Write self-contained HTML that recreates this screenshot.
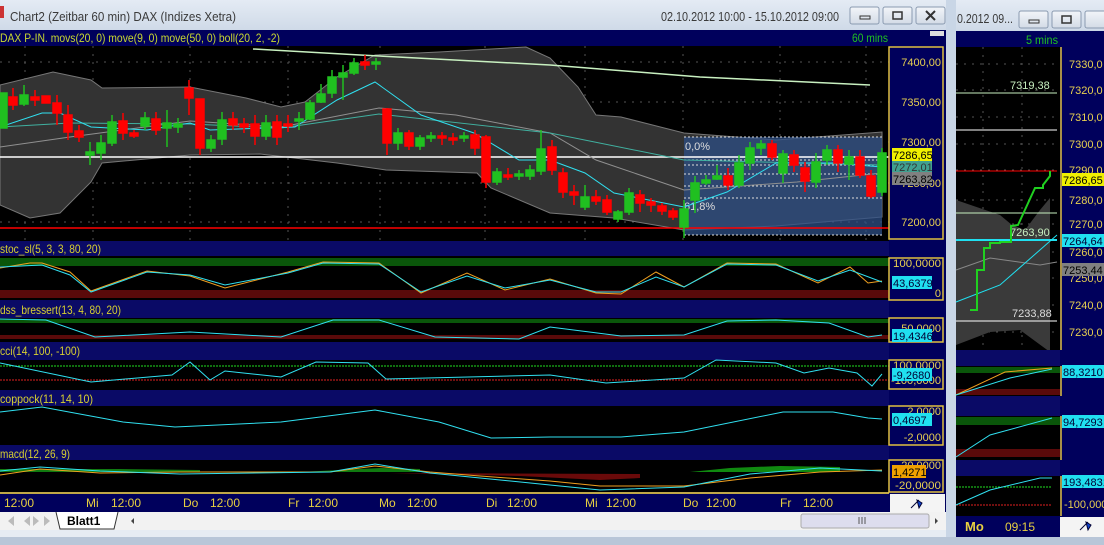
<!DOCTYPE html>
<html><head><meta charset="utf-8"><style>
html,body{margin:0;padding:0;background:#c8d4e4;overflow:hidden}
svg{display:block}
text{font-family:"Liberation Sans",sans-serif}
</style></head><body>
<svg width="1104" height="545" viewBox="0 0 1104 545" xmlns="http://www.w3.org/2000/svg">
<defs>
<linearGradient id="tb" x1="0" y1="0" x2="0" y2="1"><stop offset="0" stop-color="#e4ebf4"/><stop offset="1" stop-color="#cfdae8"/></linearGradient>
<linearGradient id="btn" x1="0" y1="0" x2="0" y2="1"><stop offset="0" stop-color="#f2f5f9"/><stop offset="1" stop-color="#d3dbe6"/></linearGradient>
</defs>
<rect x="0" y="0" width="1104" height="545" fill="#c9d6e6"/>
<rect x="0" y="0" width="946" height="30" fill="url(#tb)"/>
<rect x="0" y="6" width="4" height="12" fill="#c33"/>
<text x="10" y="21" font-size="13" fill="#3a3a3a" textLength="226" lengthAdjust="spacingAndGlyphs">Chart2 (Zeitbar 60 min)  DAX (Indizes Xetra)</text>
<text x="661" y="21" font-size="12.5" fill="#3a3a3a" textLength="178" lengthAdjust="spacingAndGlyphs">02.10.2012 10:00 - 15.10.2012 09:00</text>
<g stroke="#8a9ab0" fill="url(#btn)"><rect x="850" y="7" width="29" height="17" rx="2"/><rect x="883" y="7" width="29" height="17" rx="2"/><rect x="916" y="7" width="29" height="17" rx="2"/></g>
<rect x="860" y="16" width="10" height="3" fill="none" stroke="#333"/>
<rect x="893" y="12" width="9" height="7" fill="none" stroke="#333" stroke-width="1.5"/>
<path d="M926 11l9 9M935 11l-9 9" stroke="#333" stroke-width="2"/>
<rect x="0" y="30" width="946" height="16" fill="#00005c"/>
<text x="0" y="42" font-size="12" fill="#c8d830" textLength="280" lengthAdjust="spacingAndGlyphs">DAX P-IN. movs(20, 0) move(9, 0) move(50, 0) boll(20, 2, -2)</text>
<text x="852" y="42" font-size="12" fill="#20c020" textLength="36" lengthAdjust="spacingAndGlyphs">60 mins</text>
<rect x="930" y="31" width="14" height="5" fill="#ddd"/>
<rect x="0" y="46" width="889" height="195" fill="#000"/>
<g stroke="#555" stroke-dasharray="2,6" stroke-width="1">
<path d="M0 62H889M0 102H889M0 142H889M0 183H889M0 222H889"/>
<path d="M25 46V493M93 46V493M190 46V493M288 46V493M380 46V493M485 46V493M585 46V493M683 46V493M780 46V493M866 46V493"/>
</g>
<path d="M0 85L53 72L91 80L102 88L190 87L246 98L281 107L305 102L337 77L375 55L439 52L526 47L550 58L578 87L596 115L621 117L684 133L776 140L882 132L882 217L776 226L684 230L614 218L550 213L491 188L477 173L386 170L337 163L260 154L190 155L102 163L91 182L60 213L30 218L0 205Z" fill="#333" stroke="#777"/>
<rect x="684" y="137" width="198" height="98" fill="#2e4f86" opacity="0.75"/>
<g stroke="#ddd" stroke-dasharray="2,2"><path d="M684 137H882M684 160H882M684 165H882M684 174H882M684 186H882M684 198H882M684 235H882"/></g>
<text x="685" y="150" font-size="11" fill="#ddd">0,0%</text>
<text x="684" y="210" font-size="11" fill="#ddd">61,8%</text>
<path d="M0 157H889" stroke="#fff" stroke-width="1.5"/>
<path d="M0 228H889" stroke="#f00" stroke-width="1.5"/>
<path d="M253 49L360 55L550 65L700 77L870 85" stroke="#c8f0c0" fill="none" stroke-width="1.5"/>
<polyline points="0,147 70,137 190,121 281,127 379,108 456,115 550,133 596,160 684,190 797,182 882,173" stroke="#909090" fill="none"/>
<polyline points="0,127 70,123 190,124 281,128 379,114 550,133 684,160 882,165" stroke="#40b0a0" fill="none"/>
<polyline points="0,127 42,113 60,113 91,127 147,130 190,123 210,130 295,127 337,100 375,82 421,115 474,133 519,160 550,160 585,173 614,193 684,207 727,192 776,163 833,163 882,167" stroke="#30e0f0" fill="none"/>
<g stroke-width="1.5">
<g fill="#20c020" stroke="#20c020">
<rect x="-1" y="93" width="8" height="35"/><rect x="20" y="95" width="8" height="9"/><path d="M24 85V106M90 142V165M101 135V160M112 115V146M145 112V130M167 110V147M178 118V133M211 135V152M222 112V145M266 115V140M299 112V130M310 100V120M321 84V103M332 70V98M343 65V100M354 58V75M376 58V70M398 128V150M420 135V150M431 132V142M464 132V142M497 168V185M519 170V180M530 165V180M541 130V175M585 185V210M618 210V222M629 188V215M684 200V238M695 176V213M706 175V185M717 165V180M739 155V188M750 142V170M761 140V155M783 150V183M816 153V188M827 145V165M849 150V180M882 148V196"/>
<rect x="86" y="152" width="8" height="3"/><rect x="97" y="143" width="8" height="10"/><rect x="108" y="122" width="8" height="21"/><rect x="141" y="118" width="8" height="8"/><rect x="163" y="123" width="8" height="5"/><rect x="174" y="124" width="8" height="3"/><rect x="207" y="140" width="8" height="8"/><rect x="218" y="120" width="8" height="19"/><rect x="262" y="123" width="8" height="13"/><rect x="295" y="119" width="8" height="2"/><rect x="306" y="103" width="8" height="16"/><rect x="317" y="94" width="8" height="8"/><rect x="328" y="77" width="8" height="16"/><rect x="339" y="73" width="8" height="4"/><rect x="350" y="63" width="8" height="10"/><rect x="372" y="62" width="8" height="2"/><rect x="394" y="133" width="8" height="10"/><rect x="416" y="138" width="8" height="8"/><rect x="427" y="136" width="8" height="2"/><rect x="460" y="136" width="8" height="2"/><rect x="493" y="172" width="8" height="10"/><rect x="515" y="174" width="8" height="2"/><rect x="526" y="170" width="8" height="6"/><rect x="537" y="149" width="8" height="22"/><rect x="581" y="197" width="8" height="10"/><rect x="614" y="212" width="8" height="7"/><rect x="625" y="193" width="8" height="19"/><rect x="680" y="209" width="8" height="18"/><rect x="691" y="183" width="8" height="17"/><rect x="702" y="180" width="8" height="3"/><rect x="713" y="176" width="8" height="3"/><rect x="735" y="163" width="8" height="22"/><rect x="746" y="148" width="8" height="15"/><rect x="757" y="144" width="8" height="4"/><rect x="779" y="154" width="8" height="19"/><rect x="812" y="162" width="8" height="20"/><rect x="823" y="150" width="8" height="10"/><rect x="845" y="157" width="8" height="7"/><rect x="878" y="153" width="8" height="39"/>
</g>
<g fill="#f00" stroke="#f00">
<path d="M13 88V110M35 90V106M57 95V125M68 105V140M79 125V142M123 113V140M134 130V138M156 112V135M189 80V115M200 99V155M233 112V130M244 118V133M255 115V145M277 115V145M288 115V132M365 55V70M387 108V155M409 130V150M442 132V145M453 133V145M475 130V155M486 135V188M508 168V180M552 140V175M563 168V198M574 185V205M596 190V205M607 195V215M640 190V212M651 198V212M662 203V215M673 208V220M728 168V190M772 140V160M794 150V172M805 162V192M838 145V172M860 150V178M871 170V198"/>
<rect x="9" y="97" width="8" height="8"/><rect x="31" y="97" width="8" height="3"/><rect x="42" y="96" width="8" height="7"/><rect x="53" y="103" width="8" height="10"/><rect x="64" y="115" width="8" height="17"/><rect x="75" y="131" width="8" height="6"/><rect x="119" y="121" width="8" height="12"/><rect x="130" y="133" width="8" height="3"/><rect x="152" y="119" width="8" height="11"/><rect x="185" y="88" width="8" height="10"/><rect x="196" y="99" width="8" height="49"/><rect x="229" y="119" width="8" height="6"/><rect x="240" y="124" width="8" height="3"/><rect x="251" y="124" width="8" height="12"/><rect x="273" y="122" width="8" height="15"/><rect x="284" y="124" width="8" height="2"/><rect x="361" y="62" width="8" height="3"/><rect x="383" y="109" width="8" height="34"/><rect x="405" y="133" width="8" height="13"/><rect x="438" y="136" width="8" height="2"/><rect x="449" y="138" width="8" height="2"/><rect x="471" y="135" width="8" height="13"/><rect x="482" y="137" width="8" height="45"/><rect x="504" y="175" width="8" height="2"/><rect x="548" y="147" width="8" height="23"/><rect x="559" y="173" width="8" height="19"/><rect x="570" y="192" width="8" height="3"/><rect x="592" y="197" width="8" height="4"/><rect x="603" y="200" width="8" height="12"/><rect x="636" y="195" width="8" height="8"/><rect x="647" y="202" width="8" height="3"/><rect x="658" y="206" width="8" height="5"/><rect x="669" y="211" width="8" height="6"/><rect x="724" y="176" width="8" height="9"/><rect x="768" y="144" width="8" height="13"/><rect x="790" y="155" width="8" height="10"/><rect x="801" y="168" width="8" height="13"/><rect x="834" y="150" width="8" height="13"/><rect x="856" y="157" width="8" height="18"/><rect x="867" y="176" width="8" height="20"/>
</g>
</g>
<rect x="0" y="241" width="889" height="15" fill="#0a0a66"/>
<text x="0" y="253" font-size="12" fill="#d8d030" textLength="101" lengthAdjust="spacingAndGlyphs">stoc_sl(5, 3, 3, 80, 20)</text>
<rect x="0" y="256" width="889" height="44" fill="#000"/>
<rect x="0" y="258" width="889" height="8" fill="#0a560a"/>
<rect x="0" y="290" width="889" height="8" fill="#5a0a0a"/>
<polyline points="0,268 30,263 42,263 70,272 91,291 147,271 190,276 225,288 288,272 323,262 379,263 421,293 467,273 505,290 550,279 596,293 621,294 656,272 684,287 727,263 776,264 818,283 850,267 868,283 882,281" stroke="#f0a020" fill="none"/>
<polyline points="0,267 42,265 70,275 91,292 147,272 190,275 225,285 288,273 323,263 379,264 421,292 467,276 505,288 550,280 596,292 621,292 656,277 684,287 727,264 776,265 818,281 850,270 882,282" stroke="#30e0f0" fill="none"/>
<rect x="0" y="300" width="889" height="18" fill="#0a0a66"/>
<text x="0" y="314" font-size="12" fill="#d8d030" textLength="121" lengthAdjust="spacingAndGlyphs">dss_bressert(13, 4, 80, 20)</text>
<rect x="0" y="318" width="889" height="24" fill="#000"/>
<rect x="0" y="319" width="889" height="4" fill="#0a560a"/>
<rect x="0" y="335" width="889" height="4" fill="#5a0a0a"/>
<polyline points="0,319 46,320 95,337 190,332 281,337 333,320 379,320 435,337 519,339 550,327 621,336 684,335 727,321 776,320 829,323 868,337 882,335" stroke="#30e0f0" fill="none"/>
<rect x="0" y="342" width="889" height="18" fill="#0a0a66"/>
<text x="0" y="355" font-size="12" fill="#d8d030" textLength="80" lengthAdjust="spacingAndGlyphs">cci(14, 100, -100)</text>
<rect x="0" y="360" width="889" height="30" fill="#000"/>
<path d="M0 366H889" stroke="#20e020" stroke-dasharray="2,1"/>
<path d="M0 380H889" stroke="#e02020" stroke-dasharray="2,1"/>
<polyline points="0,363 91,382 172,375 190,362 210,380 225,371 281,377 316,362 368,363 386,379 550,375 606,383 684,378 716,360 776,363 804,373 829,368 857,373 872,386 882,374" stroke="#30e0f0" fill="none"/>
<rect x="0" y="390" width="889" height="16" fill="#0a0a66"/>
<text x="0" y="403" font-size="12" fill="#d8d030" textLength="93" lengthAdjust="spacingAndGlyphs">coppock(11, 14, 10)</text>
<rect x="0" y="406" width="889" height="39" fill="#000"/>
<polyline points="0,412 42,407 123,422 175,427 281,422 375,410 439,422 491,438 550,437 621,437 684,432 783,412 833,412 868,418 882,419" stroke="#30e0f0" fill="none"/>
<rect x="0" y="445" width="889" height="15" fill="#0a0a66"/>
<text x="0" y="458" font-size="12" fill="#d8d030" textLength="70" lengthAdjust="spacingAndGlyphs">macd(12, 26, 9)</text>
<rect x="0" y="460" width="889" height="33" fill="#000"/>
<path d="M0 469H120L200 470V472H0Z" fill="#107a10"/>
<path d="M300 472L380 468L420 469V472Z" fill="#107a10"/>
<path d="M690 472L730 468L780 466L840 467V472Z" fill="#108a10"/>
<path d="M390 473L520 476L600 480L640 478V474Z" fill="#6a0a0a"/>
<polyline points="0,475 40,469 100,473 180,472 330,472 375,466 430,472 480,476 550,481 600,486 684,486 750,478 820,472 882,470" stroke="#f0a020" fill="none"/>
<polyline points="0,471 40,467 100,471 180,474 330,472 375,464 430,473 480,478 550,485 600,490 684,487 750,474 820,468 882,471" stroke="#30e0f0" fill="none"/>
<rect x="0" y="492" width="946" height="20" fill="#00005c"/>
<path d="M0 493H889" stroke="#ffe040" stroke-width="1.5"/>
<g font-size="12" fill="#e8d040">
<text x="-2" y="507">i  12:00</text><text x="86" y="507">Mi</text><text x="111" y="507">12:00</text><text x="183" y="507">Do</text><text x="210" y="507">12:00</text><text x="288" y="507">Fr</text><text x="308" y="507">12:00</text><text x="379" y="507">Mo</text><text x="407" y="507">12:00</text><text x="486" y="507">Di</text><text x="507" y="507">12:00</text><text x="585" y="507">Mi</text><text x="606" y="507">12:00</text><text x="683" y="507">Do</text><text x="706" y="507">12:00</text><text x="780" y="507">Fr</text><text x="803" y="507">12:00</text>
</g>
<rect x="890" y="494" width="55" height="18" fill="#f4f4f4"/>
<path d="M911 508l8-8 M917 500l5 3-3 5z" stroke="#003" fill="#14c" />
<rect x="889" y="46" width="57" height="446" fill="#00005c"/>
<g stroke="#e0c040" fill="none" stroke-width="1.5">
<rect x="889" y="47" width="54" height="192"/>
<rect x="889" y="258" width="54" height="42"/>
<rect x="889" y="318" width="54" height="24"/>
<rect x="889" y="360" width="54" height="29"/>
<rect x="889" y="406" width="54" height="39"/>
<rect x="889" y="460" width="54" height="32"/>
</g>
<g font-size="11" fill="#e8d050" text-anchor="end">
<text x="941" y="66">7400,00</text><text x="941" y="106">7350,00</text><text x="941" y="146">7300,00</text><text x="941" y="187">7250,00</text><text x="941" y="226">7200,00</text>
<text x="941" y="267" textLength="48" lengthAdjust="spacingAndGlyphs">100,0000</text><text x="941" y="297">0</text>
<text x="941" y="332">50,0000</text>
<text x="941" y="369" textLength="48" lengthAdjust="spacingAndGlyphs">100,0000</text><text x="941" y="384" textLength="50" lengthAdjust="spacingAndGlyphs">-100,0000</text>
<text x="941" y="415">2,0000</text><text x="941" y="441">-2,0000</text>
<text x="941" y="469">20,0000</text><text x="941" y="489" textLength="46" lengthAdjust="spacingAndGlyphs">-20,0000</text>
</g>
<g font-size="11">
<rect x="892" y="148" width="40" height="13" fill="#f0f000"/><text x="893" y="159" fill="#000">7286,65</text>
<rect x="892" y="161" width="40" height="11" fill="#40a090"/><text x="893" y="171" fill="#333">7272,01</text>
<rect x="892" y="172" width="40" height="13" fill="#808080"/><text x="893" y="183" fill="#000">7263,82</text>
<rect x="892" y="276" width="40" height="13" fill="#20e0f0"/><text x="893" y="287" fill="#003">43,6379</text>
<rect x="892" y="329" width="40" height="13" fill="#20e0f0"/><text x="893" y="340" fill="#003">19,4346</text>
<rect x="892" y="368" width="40" height="13" fill="#20e0f0"/><text x="893" y="379" fill="#003">-9,2680</text>
<rect x="892" y="413" width="40" height="13" fill="#20e0f0"/><text x="893" y="424" fill="#003">0,4697</text>
<rect x="892" y="465" width="34" height="13" fill="#f0a000"/><text x="893" y="476" fill="#000">1,4271</text>
</g>
<rect x="0" y="512" width="946" height="18" fill="#f2f2f2"/>
<g fill="#bbb"><path d="M8 521l6-5v10z M24 521l6-5v10z M33 516l6 5-6 5z M44 516l6 5-6 5z"/></g>
<path d="M56 512l4 17h54l4-17" fill="#fff" stroke="#333"/>
<text x="67" y="525" font-size="12" font-weight="bold" fill="#000">Blatt1</text>
<path d="M131 521l3-3v6z" fill="#444"/>
<rect x="801" y="514" width="128" height="14" rx="2" fill="#dde" stroke="#aaa"/>
<path d="M859 517v7M862 517v7M865 517v7" stroke="#555"/>
<path d="M935 518l3 3-3 3z" fill="#444"/>
<rect x="0" y="530" width="946" height="8" fill="#e6ecf3"/>
<rect x="0" y="537" width="1104" height="8" fill="#b8c6d8"/>
<rect x="956" y="0" width="148" height="30" fill="url(#tb)"/>
<text x="957" y="23" font-size="12.5" fill="#3a3a3a" textLength="56" lengthAdjust="spacingAndGlyphs">0.2012 09...</text>
<g stroke="#8a9ab0" fill="url(#btn)"><rect x="1019" y="11" width="29" height="17" rx="2"/><rect x="1052" y="11" width="29" height="17" rx="2"/><rect x="1085" y="11" width="29" height="17" rx="2"/></g>
<rect x="1029" y="20" width="10" height="3" fill="none" stroke="#333"/>
<rect x="1062" y="16" width="9" height="7" fill="none" stroke="#333" stroke-width="1.5"/>
<rect x="956" y="31" width="148" height="16" fill="#00005c"/>
<text x="1026" y="44" font-size="12" fill="#20c020" textLength="32" lengthAdjust="spacingAndGlyphs">5 mins</text>
<rect x="956" y="47" width="104" height="303" fill="#000"/>
<g stroke="#555" stroke-dasharray="2,6"><path d="M956 64H1060M956 90H1060M956 117H1060M956 144H1060M956 170H1060M956 200H1060M956 224H1060M956 252H1060M956 278H1060M956 305H1060M956 332H1060M983 47V490M1022 47V490"/></g>
<path d="M956 200L1000 215L1012 225L1025 230L1040 210L1050 198V352L1020 330L990 332L956 345Z" fill="#3a3a3a"/>
<path d="M956 93H1057" stroke="#c8f0c0"/><text x="1010" y="89" font-size="11" fill="#c8f0c0">7319,38</text>
<path d="M956 130H1057" stroke="#fff"/>
<path d="M956 171H1057" stroke="#f00"/>
<path d="M956 213H1057" stroke="#c8f0c0"/>
<text x="1010" y="236" font-size="11" fill="#c8f0c0">7263,90</text>
<path d="M956 240H1057" stroke="#20e0f0" stroke-width="2"/>
<path d="M956 270L990 258L1040 265L1057 262" stroke="#888" fill="none"/>
<path d="M956 302L1000 285L1057 235" stroke="#20e0f0" fill="none"/>
<path d="M970 310H977V270H984V248H990V243H1000V242H1011V226L1018 225L1035 188H1043V185L1050 176V171" stroke="#20d020" fill="none" stroke-width="2"/>
<text x="1012" y="317" font-size="11" fill="#ddd">7233,88</text>
<path d="M956 321H1057" stroke="#fff"/>
<rect x="956" y="350" width="104" height="16" fill="#0a0a66"/>
<rect x="956" y="366" width="104" height="30" fill="#000"/>
<rect x="956" y="367" width="104" height="6" fill="#0a560a"/><rect x="956" y="389" width="104" height="6" fill="#5a0a0a"/>
<polyline points="956,395 1005,372 1052,368" stroke="#f0a020" fill="none"/>
<polyline points="956,395 1010,378 1052,369" stroke="#30e0f0" fill="none"/>
<rect x="956" y="396" width="104" height="20" fill="#0a0a66"/>
<rect x="956" y="416" width="104" height="44" fill="#000"/>
<rect x="956" y="417" width="104" height="8" fill="#0a560a"/><rect x="956" y="449" width="104" height="8" fill="#5a0a0a"/>
<polyline points="956,457 990,435 1052,418" stroke="#30e0f0" fill="none"/>
<rect x="956" y="460" width="104" height="16" fill="#0a0a66"/>
<rect x="956" y="476" width="104" height="40" fill="#000"/>
<path d="M956 487H1052" stroke="#20e020" stroke-dasharray="2,1"/><path d="M956 505H1052" stroke="#e02020" stroke-dasharray="2,1"/>
<polyline points="956,505 990,490 1040,478 1052,478" stroke="#30e0f0" fill="none"/>
<rect x="956" y="516" width="104" height="21" fill="#00005c"/>
<text x="965" y="531" font-size="13" font-weight="bold" fill="#e8d040">Mo</text>
<text x="1005" y="531" font-size="12" fill="#e8d040">09:15</text>
<rect x="1060" y="47" width="44" height="470" fill="#00005c"/>
<rect x="1060" y="517" width="44" height="20" fill="#f4f4f4"/>
<g stroke="#e0c040" fill="none" stroke-width="1.5"><path d="M1061 47V350M1061 366V396M1061 416V460M1061 476V516"/></g>
<g font-size="11" fill="#e8d050"><text x="1069" y="68">7330,0</text><text x="1069" y="94">7320,0</text><text x="1069" y="121">7310,0</text><text x="1069" y="148">7300,0</text><text x="1069" y="174">7290,0</text><text x="1069" y="204">7280,0</text><text x="1069" y="228">7270,0</text><text x="1069" y="256">7260,0</text><text x="1069" y="282">7250,0</text><text x="1069" y="309">7240,0</text><text x="1069" y="336">7230,0</text><text x="1064" y="508">-100,000</text></g>
<g font-size="11">
<rect x="1062" y="173" width="42" height="13" fill="#f0f000"/><text x="1063" y="184" fill="#000">7286,65</text>
<rect x="1062" y="234" width="42" height="13" fill="#20e0f0"/><text x="1063" y="245" fill="#003">7264,64</text>
<rect x="1062" y="263" width="42" height="13" fill="#808080"/><text x="1063" y="274" fill="#000">7253,44</text>
<rect x="1062" y="365" width="42" height="13" fill="#20e0f0"/><text x="1063" y="376" fill="#003">88,3210</text>
<rect x="1062" y="415" width="42" height="13" fill="#20e0f0"/><text x="1063" y="426" fill="#003">94,7293</text>
<rect x="1062" y="475" width="42" height="13" fill="#20e0f0"/><text x="1063" y="486" fill="#003">193,4831</text>
</g>
<path d="M1080 530l8-8 M1086 522l5 3-3 5z" stroke="#003" fill="#14c"/>
</svg>
</body></html>
